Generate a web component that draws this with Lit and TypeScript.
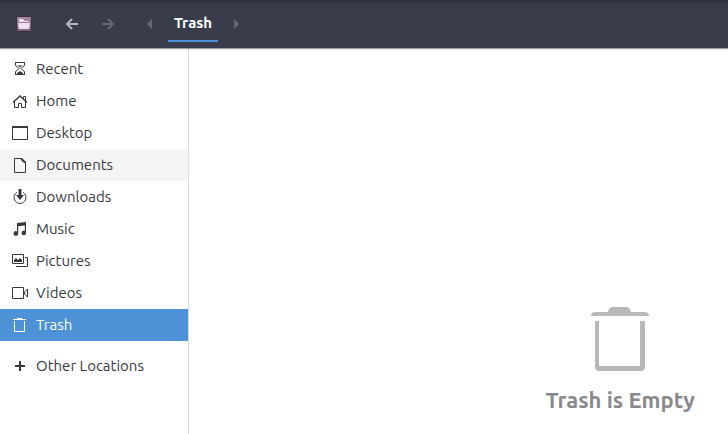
import { LitElement, css, html, svg, type SVGTemplateResult } from "lit";
import { customElement, state } from "lit/decorators.js";

const icons: Record<string, SVGTemplateResult> = {
  recent: svg`<path class="line" d="M3 1.500H13M3 13.500H13M3.500 2V4C3.500 5.500 7 6.500 7 7.500C7 8.500 3.500 9.500 3.500 11V13M12.500 2V4C12.500 5.500 9 6.500 9 7.500C9 8.500 12.500 9.500 12.500 11V13"/><path d="M5.500 4.500H10.500L8 6.500ZM5 13V12L8 10L11 12V13Z"/>`,
  home: svg`<path class="line" stroke-width="1.400" d="M1 9.500L8 3L15 9.500"/><path class="line" d="M2.500 8.500V14.500H6.500V10.500H9.500V14.500H13.500V8.500M11.500 5.500V3.500H13.500V7.500"/>`,
  desktop: svg`<path class="line" d="M.5 1.500H15.500V14.500H.5Z"/><path d="M0 1H16V3H0Z"/>`,
  documents: svg`<path class="line" d="M2.500 1.500H9.500L13.500 5.500V15.500H2.500Z"/><path d="M9 1H10L14 5V6H12L9 3Z"/>`,
  downloads: svg`<path class="line" d="M5 3.300A6 6 0 1 0 11 3.300"/><path d="M6.500 0H9.500V6H12L8 11L4 6H6.500Z"/>`,
  music: svg`<path d="M5 2L14 1V12A2.200 2.200 0 1 1 12.800 10V4.500L6.200 5.200V12.500A2.300 2.300 0 1 1 5 10.500Z"/>`,
  pictures: svg`<path class="line" d="M.5 1.500H11.500V10.500H.5ZM13 4.500H15.500V13.500H4"/><path d="M2 9V7L4 5L6 7L8 5L10 7V9Z"/>`,
  videos: svg`<path class="line" d="M.5 2.500H11.500V13.500H.5ZM15.500 4V12L12.500 9V7Z"/>`,
  trash: svg`<path class="line" d="M1 2.500H14M2.500 4V14.500H12.500V4"/><path d="M5 2V1H10V2Z"/>`,
  other: svg`<path d="M7 3H9V7H13V9H9V13H7V9H3V7H7Z"/>`,
};

const places = [
  ["recent", "Recent"],
  ["home", "Home"],
  ["desktop", "Desktop"],
  ["documents", "Documents"],
  ["downloads", "Downloads"],
  ["music", "Music"],
  ["pictures", "Pictures"],
  ["videos", "Videos"],
  ["trash", "Trash"],
  ["other", "Other Locations"],
];

@customElement("app-root")
export class AppRoot extends LitElement {
  @state() private current = "trash";

  static styles = css`
    :host {
      display: flex;
      flex-direction: column;
      min-height: 100vh;
      background: #fff;
      color: #38393f;
      font: 15px/20px Ubuntu, "Noto Sans", sans-serif;
    }
    * { box-sizing: border-box; }
    svg { display: block; flex: none; fill: currentColor; }
    .line { fill: none; stroke: currentColor; }
    button {
      border: 0;
      margin: 0;
      padding: 0;
      background: none;
      color: inherit;
      font: inherit;
      cursor: pointer;
    }
    header {
      display: flex;
      align-items: center;
      height: 48px;
      padding-left: 16px;
      background: linear-gradient(#2c2f39, #383b49 4px, #393c4a);
      box-shadow: 0 1px 1px #00000060;
      z-index: 1;
    }
    .history { display: flex; gap: 20px; margin-left: 32px; color: #b5b7bc; }
    .history button:disabled { color: #656873; }
    .path { display: flex; align-items: center; margin-left: 28px; color: #656873; }
    .crumb {
      height: 36px;
      margin: 0 12px;
      padding: 0 6px;
      border-bottom: 2px solid #4a90d9;
      color: #fff;
      font-weight: 700;
    }
    main { display: flex; flex: 1; }
    nav {
      flex: none;
      width: 189px;
      padding-top: 5px;
      border-right: 1px solid #dcdcdc;
    }
    ul { margin: 0; padding: 0; list-style: none; }
    .place {
      display: flex;
      align-items: center;
      gap: 8px;
      width: 100%;
      height: 32px;
      padding: 0 12px;
      text-align: left;
    }
    .documents { background: #f4f4f4; }
    .other { margin-top: 9px; }
    .selected { background: #4d91d7; color: #fff; }
    .content {
      display: flex;
      flex: 1;
      justify-content: flex-end;
      padding: 256px 33px 16px 0;
    }
    .empty {
      display: flex;
      flex-direction: column;
      align-items: center;
      gap: 16px;
      color: #b8b8b8;
    }
    h1 {
      margin: 0;
      color: #88898c;
      font-size: 22px;
      line-height: 24px;
      font-weight: 700;
    }
  `;

  render() {
    return html`
      <header>
        <svg width="16" height="16" viewBox="0 0 16 16" aria-hidden="true">
          <defs><linearGradient id="tile" x2="0" y2="1"><stop stop-color="#a58aa0"/><stop offset="1" stop-color="#855b80"/></linearGradient></defs>
          <rect x="0.5" y="0.5" width="15" height="15" rx="1.500" fill="#2c2735"/>
          <rect x="1" y="1" width="14" height="14" rx="1" fill="url(#tile)"/>
          <path fill="#f0e2f4" d="M3 3H7L9 5H13V6H3ZM2 7H14L13 13H3Z"/>
        </svg>
        <div class="history">
          <button aria-label="Back">
            <svg width="16" height="16" viewBox="0 0 16 16"><path class="line" stroke-width="2" d="M8 3L3 8L8 13M3 8H14"/></svg>
          </button>
          <button aria-label="Forward" disabled>
            <svg width="16" height="16" viewBox="0 0 16 16"><path class="line" stroke-width="2" d="M8 3L13 8L8 13M2 8H13"/></svg>
          </button>
        </div>
        <div class="path">
          <button aria-label="Scroll path left">
            <svg width="12" height="12" viewBox="0 0 12 12"><path d="M3 6L8 1V11Z"/></svg>
          </button>
          <button class="crumb">Trash</button>
          <button aria-label="Scroll path right">
            <svg width="12" height="12" viewBox="0 0 12 12"><path d="M9 6L4 1V11Z"/></svg>
          </button>
        </div>
      </header>
      <main>
        <nav aria-label="Places">
          <ul>
            ${places.map(
              ([id, label]) => html`<li>
                <button
                  class="place ${id} ${this.current === id ? "selected" : ""}"
                  @click=${() => (this.current = id)}
                >
                  <svg width="16" height="16" viewBox="0 0 16 16" aria-hidden="true">${icons[id]}</svg>
                  ${label}
                </button>
              </li>`,
            )}
          </ul>
        </nav>
        <section class="content">
          <div class="empty">
            <svg width="60" height="68" viewBox="0 0 60 68" aria-hidden="true">
              <path d="M1 12Q1 8 5 8H18Q19 3 23 3H36Q40 3 41 8H54Q59 8 59 12ZM5 17H9V62H50V17H55V63Q55 67 51 67H9Q5 67 5 63Z"/>
            </svg>
            <h1>Trash is Empty</h1>
          </div>
        </section>
      </main>
    `;
  }
}
